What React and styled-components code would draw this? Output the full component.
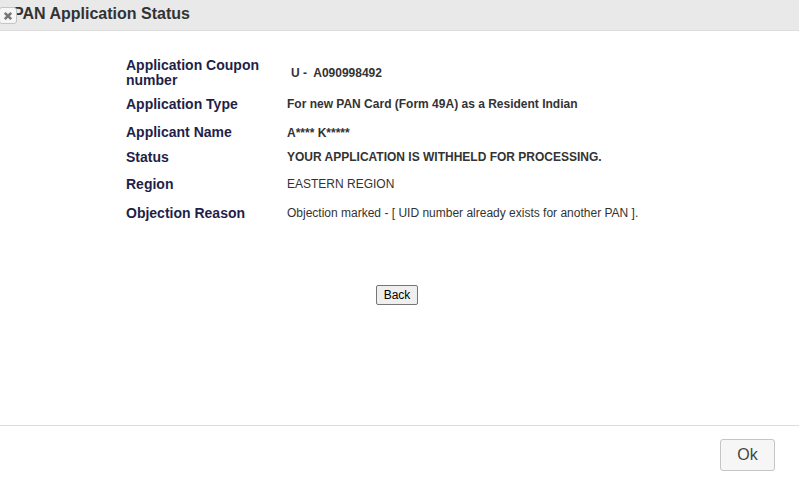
import React from "react";
import styled, { createGlobalStyle } from "styled-components";

const Global = createGlobalStyle`
  html, body { margin: 0; padding: 0; background: #ffffff; }
  body { font-family: "Liberation Sans", Arial, sans-serif; }
`;

const Dialog = styled.div`
  width: 799px;
  height: 479px;
  display: flex;
  flex-direction: column;
  background: #fff;
  position: relative;
  overflow: hidden;
`;

const TitleBar = styled.div`
  height: 30px;
  background: #e9e9e9;
  border-bottom: 1px solid #dddddd;
  display: flex;
  align-items: center;
  padding-left: 13px;
  position: relative;
`;

const Title = styled.span`
  font-size: 16px;
  font-weight: bold;
  color: #333333;
  position: relative;
  top: -1px;
`;

const CloseButton = styled.button`
  position: absolute;
  left: -1px;
  top: 7px;
  width: 18px;
  height: 17px;
  padding: 0;
  box-sizing: border-box;
  border: 1px solid #c5c5c5;
  border-radius: 3px;
  background: #f6f6f6;
  display: flex;
  align-items: center;
  justify-content: center;
`;

const Content = styled.div`
  flex: 1;
  padding: 25px 0 0 126px;
  display: flex;
  flex-direction: column;
`;

const Table = styled.div`
  display: grid;
  grid-template-columns: 161px auto;
`;

const Label = styled.div`
  height: ${(p) => p.h}px;
  display: flex;
  align-items: center;
  font-size: 14px;
  font-weight: bold;
  color: #1f1f4a;
  line-height: 15px;
`;

const Value = styled.div`
  height: ${(p) => p.h}px;
  display: flex;
  align-items: center;
  font-size: 12px;
  font-weight: ${(p) => (p.bold ? "bold" : "normal")};
  color: #333333;
  padding-left: ${(p) => p.indent || 0}px;
  white-space: pre;
`;

const BackRow = styled.div`
  display: flex;
  justify-content: center;
  width: 542px;
  margin-top: 60px;
`;

const BackButton = styled.button`
  font-family: "Liberation Sans", Arial, sans-serif;
  font-size: 12px;
  color: #000;
  background: #efefef;
  border: 1px solid #767676;
  border-radius: 2px;
  height: 20px;
  padding: 0 7px;
`;

const Footer = styled.div`
  height: 54px;
  border-top: 1px solid #dddddd;
  display: flex;
  justify-content: flex-end;
  align-items: flex-start;
  padding: 13px 24px 0 0;
  box-sizing: border-box;
`;

const OkButton = styled.button`
  font-family: "Liberation Sans", Arial, sans-serif;
  font-size: 16px;
  color: #454545;
  background: #f6f6f6;
  border: 1px solid #c5c5c5;
  border-radius: 3px;
  width: 55px;
  height: 32px;
`;

const rows = [
  { label: "Application Coupon number", value: "U -  A090998492", bold: true, h: 34, indent: 4 },
  { label: "Application Type", value: "For new PAN Card (Form 49A) as a Resident Indian", bold: true, h: 28 },
  { label: "Applicant Name", value: "A**** K*****", bold: true, h: 29 },
  { label: "Status", value: "YOUR APPLICATION IS WITHHELD FOR PROCESSING.", bold: true, h: 20 },
  { label: "Region", value: "EASTERN REGION", bold: false, h: 34 },
  { label: "Objection Reason", value: "Objection marked - [ UID number already exists for another PAN ].", bold: false, h: 24 },
];

export default function App() {
  return (
    <>
      <Global />
      <Dialog>
        <TitleBar>
          <Title>PAN Application Status</Title>
          <CloseButton aria-label="close">
            <svg width="10" height="10" viewBox="0 0 10 10">
              <path d="M1.8 1.8 L8.2 8.2 M8.2 1.8 L1.8 8.2" stroke="#777" strokeWidth="2.6" />
            </svg>
          </CloseButton>
        </TitleBar>
        <Content>
          <Table>
            {rows.map((r) => (
              <React.Fragment key={r.label}>
                <Label h={r.h}>{r.label}</Label>
                <Value h={r.h} bold={r.bold} indent={r.indent}>
                  {r.value}
                </Value>
              </React.Fragment>
            ))}
          </Table>
          <BackRow>
            <BackButton>Back</BackButton>
          </BackRow>
        </Content>
        <Footer>
          <OkButton>Ok</OkButton>
        </Footer>
      </Dialog>
    </>
  );
}
